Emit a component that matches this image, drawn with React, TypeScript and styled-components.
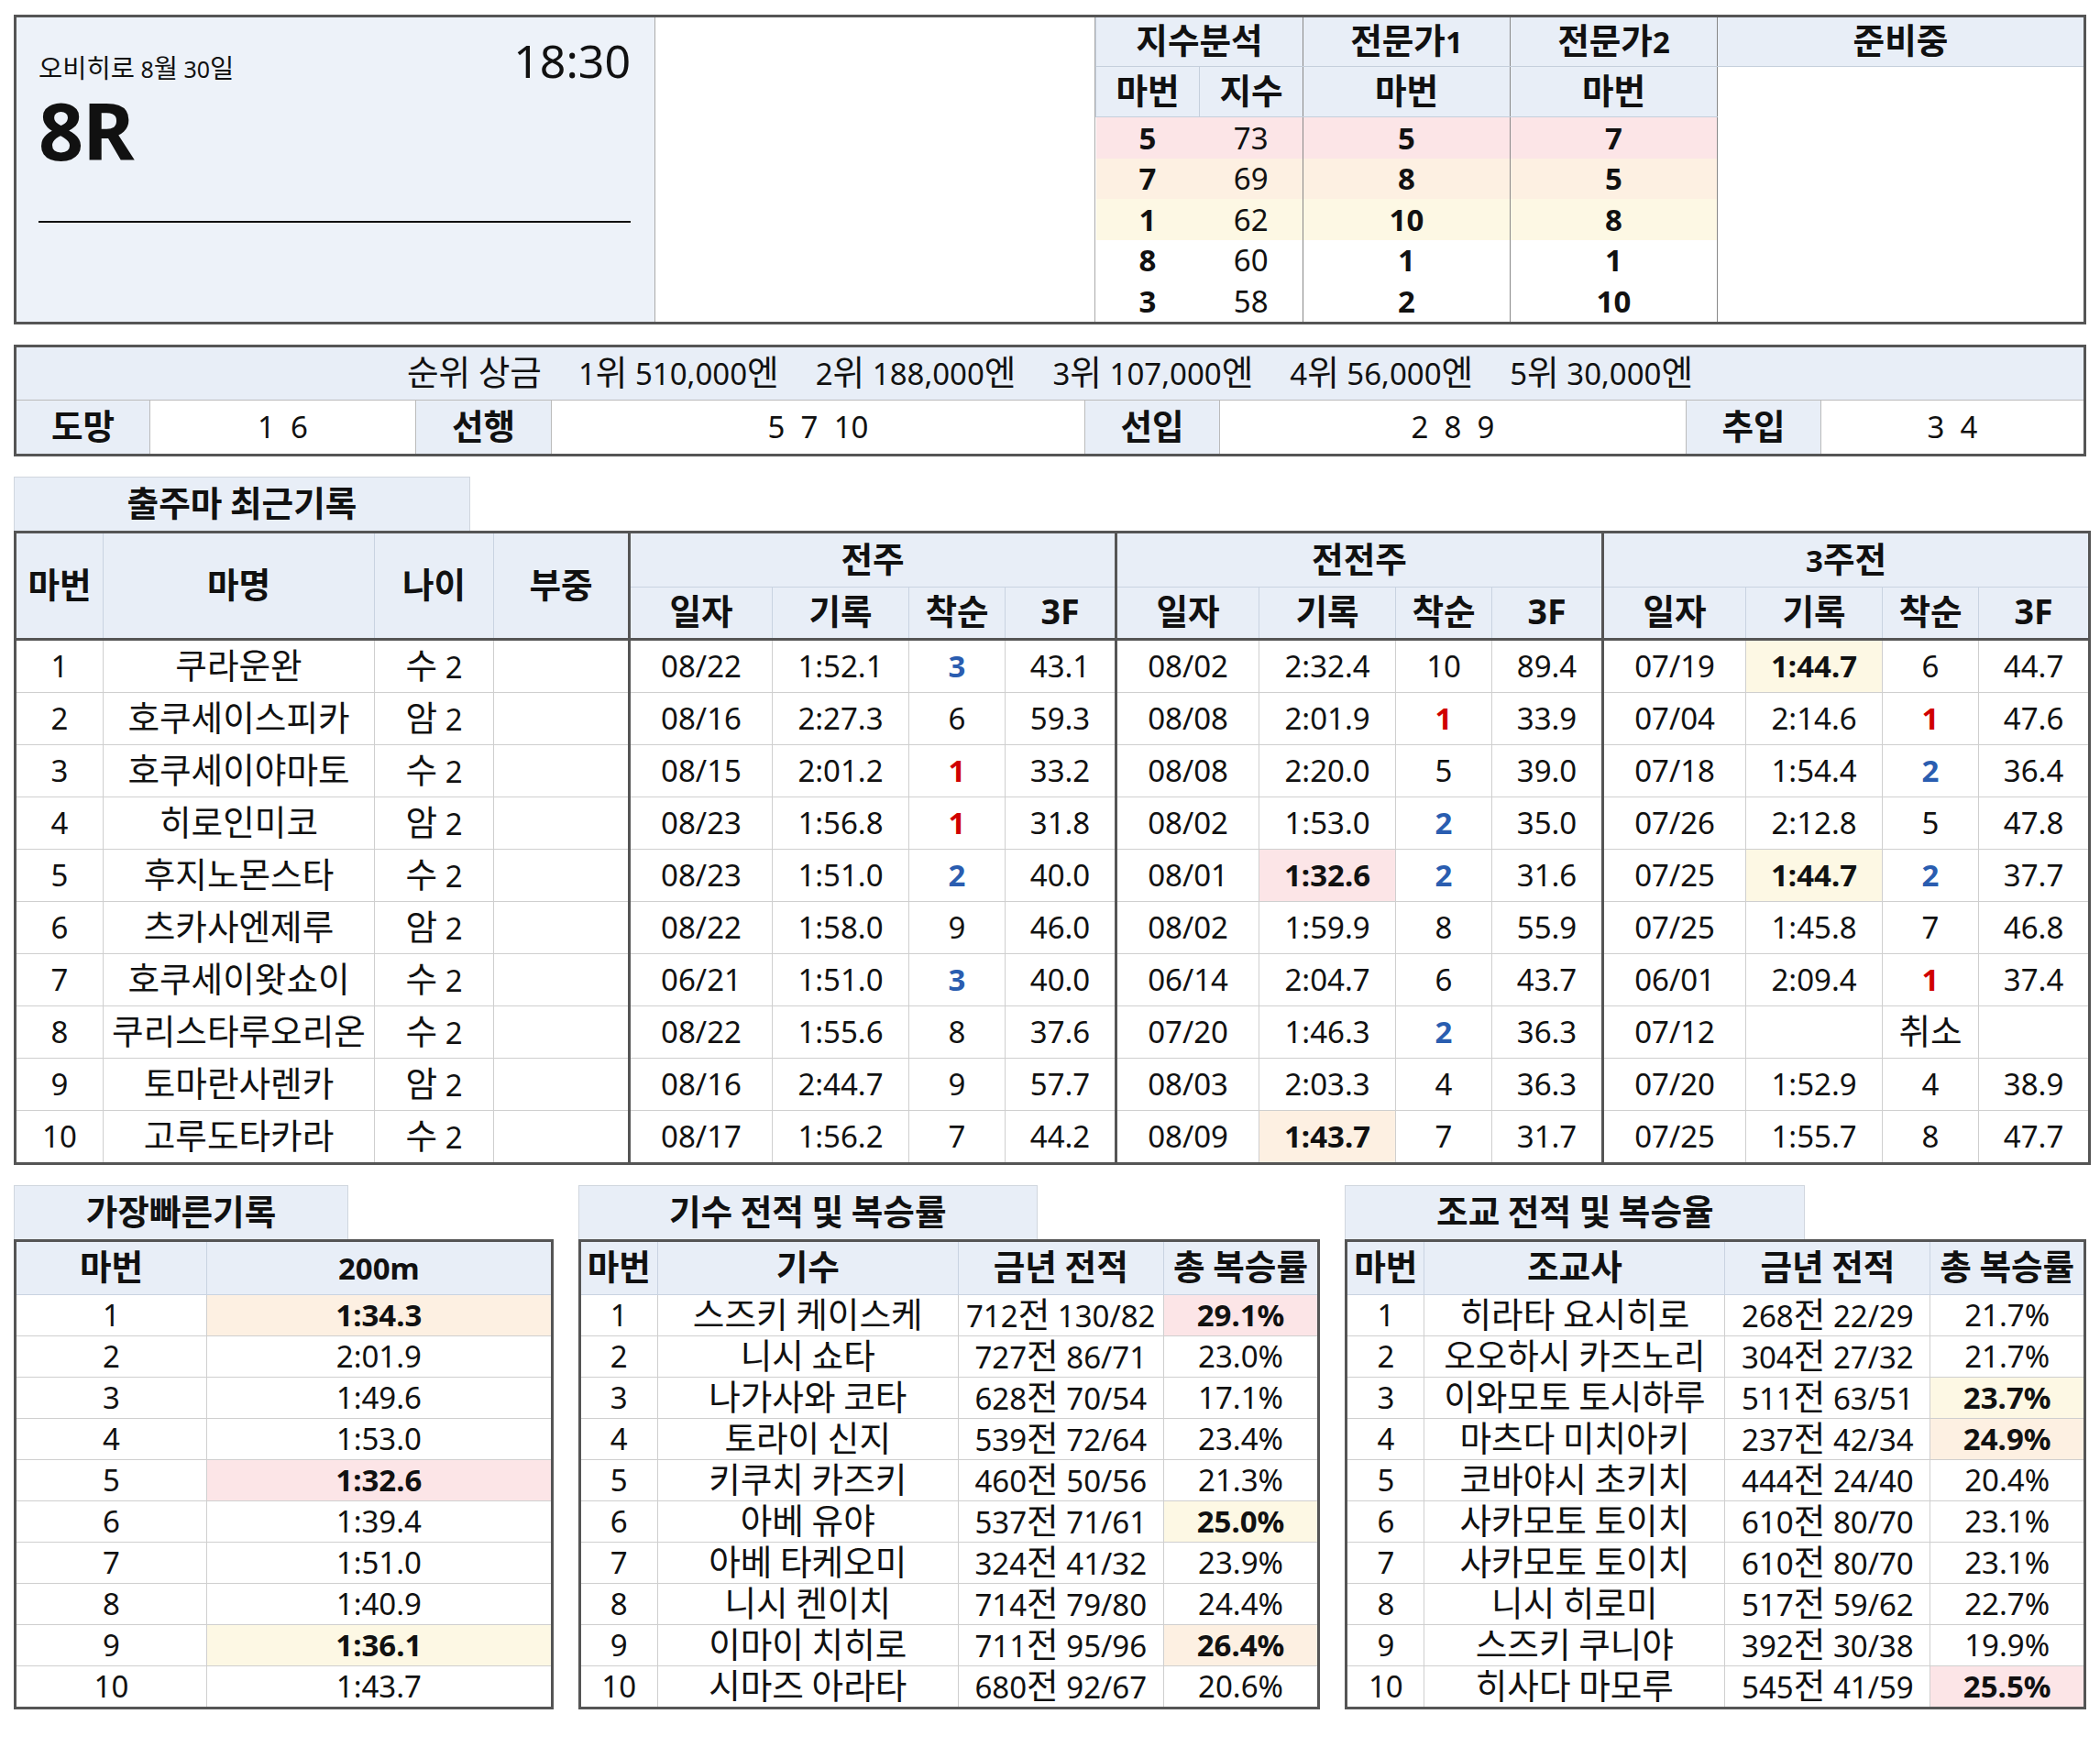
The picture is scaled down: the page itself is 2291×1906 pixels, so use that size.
import type { ReactNode } from "react";
import styled, { createGlobalStyle, css } from "styled-components";

const GlobalStyle = createGlobalStyle`
  html, body {
    margin: 0;
    padding: 0;
    background: #fff;
  }
  body {
    font-family: "Noto Sans", "Noto Sans CJK KR", sans-serif;
    color: #111;
  }
`;

type Hl = "pink" | "peach" | "yellow";

const HL: Record<Hl, string> = {
  pink: "#fce5e7",
  peach: "#fdf0e2",
  yellow: "#fdf8e4",
};

// the sheet's Korean glyphs sit larger than its digits
const Hangul = styled.span`
  display: inline-block;
  font-size: 1.14em;
  line-height: 1;
`;

function ko(s: string): ReactNode {
  const parts = s.split(/([가-힣]+)/);
  return <span>{parts.map((p, i) => (i % 2 === 1 ? <Hangul key={i}>{p}</Hangul> : p))}</span>;
}

const Page = styled.div`
  width: 2261px;
  padding: 16px 0 0 15px;
  display: flex;
  flex-direction: column;
`;

/* ---------- top block ---------- */

const TopBox = styled.section`
  display: flex;
  height: 338px;
  box-sizing: border-box;
  border: 3px solid #555;
`;

const RacePanel = styled.div`
  width: 697px;
  box-sizing: border-box;
  background: #edf2f9;
  border-right: 1px solid #aaa;
  padding: 22px 26px 0 24px;
  display: flex;
  flex-direction: column;
`;

const RaceHead = styled.div`
  display: flex;
  justify-content: space-between;
  align-items: baseline;
  line-height: 1;
`;

const Venue = styled.span`
  font-size: 25px;
`;

const Time = styled.span`
  font-size: 50px;
`;

const RaceNo = styled.div`
  margin-top: 8px;
  font-size: 86px;
  font-weight: 700;
  line-height: 1;
  letter-spacing: -1px;
`;

const RaceRule = styled.div`
  margin-top: 56px;
  border-top: 2px solid #111;
`;

const Blank = styled.div`
  width: 480px;
  border-right: 1px solid #aaa;
  box-sizing: border-box;
`;

const PickWrap = styled.div`
  flex: 1;
  display: flex;
`;

const PickTable = styled.table`
  width: 100%;
  height: 100%;
  border-collapse: collapse;
  table-layout: fixed;
  font-size: 33px;
  line-height: 1.2;
`;

const PickTh = styled.th<{ $group?: boolean; $h: number }>`
  height: ${(p) => p.$h}px;
  padding: 0;
  background: #e8eef7;
  font-weight: 700;
  border-bottom: 1px solid #c5cfdc;
  border-left: 1px solid ${(p) => (p.$group ? "#888" : "#c5cfdc")};
`;

const PickTd = styled.td<{ $group?: boolean; $hl?: Hl; $bold?: boolean }>`
  height: 44px;
  padding: 0;
  text-align: center;
  font-weight: ${(p) => (p.$bold ? 700 : 400)};
  background: ${(p) => (p.$hl ? HL[p.$hl] : "#fff")};
  ${(p) => p.$group && css`border-left: 1px solid #888;`}
`;

/* ---------- prize / style block ---------- */

const PrizeBox = styled.section`
  margin-top: 22px;
  border: 3px solid #555;
  font-size: 33px;
  line-height: 1.2;
`;

const PrizeLine = styled.div`
  height: 57px;
  background: #e8eef7;
  border-bottom: 1px solid #bbb;
  display: flex;
  justify-content: center;
  align-items: center;
  gap: 40px;
`;

const StyleLine = styled.div`
  height: 58px;
  display: grid;
  grid-template-columns: 145px 290px 148px 582px 147px 509px 147px 1fr;
`;

const StyleLabel = styled.div<{ $first?: boolean }>`
  background: #e8eef7;
  font-weight: 700;
  display: flex;
  align-items: center;
  justify-content: center;
  ${(p) => !p.$first && css`border-left: 1px solid #bbb;`}
`;

const StyleValue = styled.div`
  display: flex;
  align-items: center;
  justify-content: center;
  white-space: pre;
  border-left: 1px solid #bbb;
`;

/* ---------- tabs and tables ---------- */

const Tab = styled.div<{ $w: number }>`
  width: ${(p) => p.$w}px;
  height: 59px;
  box-sizing: border-box;
  background: #e8eef7;
  border: 1px solid #d0d6de;
  border-bottom: none;
  display: flex;
  align-items: center;
  justify-content: center;
  font-size: 33px;
  font-weight: 700;
  line-height: 1.2;
`;

const Grid = styled.table`
  width: 100%;
  border-collapse: collapse;
  table-layout: fixed;
  border: 3px solid #555;
  font-size: 33px;
  line-height: 1.2;
`;

const Th = styled.th<{ $thick?: boolean; $under?: boolean; $h?: number }>`
  height: ${(p) => p.$h ?? 58}px;
  padding: 0;
  background: #e8eef7;
  font-weight: 700;
  white-space: nowrap;
  border: 1px solid #c9d3e1;
  ${(p) => p.$thick && css`border-left: 3px solid #555;`}
  ${(p) => p.$under && css`border-bottom: 3px solid #555;`}
`;

const Td = styled.td<{ $thick?: boolean; $hl?: Hl; $mark?: "red" | "blue"; $h: number }>`
  height: ${(p) => p.$h}px;
  padding: 0;
  text-align: center;
  white-space: nowrap;
  border: 1px solid #cfcfcf;
  background: ${(p) => (p.$hl ? HL[p.$hl] : "#fff")};
  font-weight: ${(p) => (p.$hl || p.$mark ? 700 : 400)};
  color: ${(p) => (p.$mark === "red" ? "#d00000" : p.$mark === "blue" ? "#2a5db0" : "#111")};
  ${(p) => p.$thick && css`border-left: 3px solid #555;`}
`;

const Section = styled.section`
  margin-top: 22px;
  display: flex;
  flex-direction: column;
`;

const Bottom = styled.div`
  margin-top: 22px;
  display: flex;
  gap: 27px;
`;

const Block = styled.div<{ $w: number }>`
  width: ${(p) => p.$w}px;
  display: flex;
  flex-direction: column;
`;

/* ---------- data ---------- */

const picks: [string, string, string, string, Hl | undefined][] = [
  ["5", "73", "5", "7", "pink"],
  ["7", "69", "8", "5", "peach"],
  ["1", "62", "10", "8", "yellow"],
  ["8", "60", "1", "1", undefined],
  ["3", "58", "2", "10", undefined],
];

type Run = [string, string, string, string];
const horses: [string, string, string, Run, Run, Run][] = [
  ["1", "쿠라운완", "수 2", ["08/22", "1:52.1", "3", "43.1"], ["08/02", "2:32.4", "10", "89.4"], ["07/19", "Y1:44.7", "6", "44.7"]],
  ["2", "호쿠세이스피카", "암 2", ["08/16", "2:27.3", "6", "59.3"], ["08/08", "2:01.9", "1", "33.9"], ["07/04", "2:14.6", "1", "47.6"]],
  ["3", "호쿠세이야마토", "수 2", ["08/15", "2:01.2", "1", "33.2"], ["08/08", "2:20.0", "5", "39.0"], ["07/18", "1:54.4", "2", "36.4"]],
  ["4", "히로인미코", "암 2", ["08/23", "1:56.8", "1", "31.8"], ["08/02", "1:53.0", "2", "35.0"], ["07/26", "2:12.8", "5", "47.8"]],
  ["5", "후지노몬스타", "수 2", ["08/23", "1:51.0", "2", "40.0"], ["08/01", "P1:32.6", "2", "31.6"], ["07/25", "Y1:44.7", "2", "37.7"]],
  ["6", "츠카사엔제루", "암 2", ["08/22", "1:58.0", "9", "46.0"], ["08/02", "1:59.9", "8", "55.9"], ["07/25", "1:45.8", "7", "46.8"]],
  ["7", "호쿠세이왓쇼이", "수 2", ["06/21", "1:51.0", "3", "40.0"], ["06/14", "2:04.7", "6", "43.7"], ["06/01", "2:09.4", "1", "37.4"]],
  ["8", "쿠리스타루오리온", "수 2", ["08/22", "1:55.6", "8", "37.6"], ["07/20", "1:46.3", "2", "36.3"], ["07/12", "", "취소", ""]],
  ["9", "토마란사렌카", "암 2", ["08/16", "2:44.7", "9", "57.7"], ["08/03", "2:03.3", "4", "36.3"], ["07/20", "1:52.9", "4", "38.9"]],
  ["10", "고루도타카라", "수 2", ["08/17", "1:56.2", "7", "44.2"], ["08/09", "O1:43.7", "7", "31.7"], ["07/25", "1:55.7", "8", "47.7"]],
];

const fastest = ["O1:34.3", "2:01.9", "1:49.6", "1:53.0", "P1:32.6", "1:39.4", "1:51.0", "1:40.9", "Y1:36.1", "1:43.7"];

const jockeys: [string, string, string][] = [
  ["스즈키 케이스케", "712전 130/82", "P29.1%"],
  ["니시 쇼타", "727전 86/71", "23.0%"],
  ["나가사와 코타", "628전 70/54", "17.1%"],
  ["토라이 신지", "539전 72/64", "23.4%"],
  ["키쿠치 카즈키", "460전 50/56", "21.3%"],
  ["아베 유야", "537전 71/61", "Y25.0%"],
  ["아베 타케오미", "324전 41/32", "23.9%"],
  ["니시 켄이치", "714전 79/80", "24.4%"],
  ["이마이 치히로", "711전 95/96", "O26.4%"],
  ["시마즈 아라타", "680전 92/67", "20.6%"],
];

const trainers: [string, string, string][] = [
  ["히라타 요시히로", "268전 22/29", "21.7%"],
  ["오오하시 카즈노리", "304전 27/32", "21.7%"],
  ["이와모토 토시하루", "511전 63/51", "Y23.7%"],
  ["마츠다 미치아키", "237전 42/34", "O24.9%"],
  ["코바야시 초키치", "444전 24/40", "20.4%"],
  ["사카모토 토이치", "610전 80/70", "23.1%"],
  ["사카모토 토이치", "610전 80/70", "23.1%"],
  ["니시 히로미", "517전 59/62", "22.7%"],
  ["스즈키 쿠니야", "392전 30/38", "19.9%"],
  ["히사다 마모루", "545전 41/59", "P25.5%"],
];

// "P1:32.6" -> pink highlight, "O" peach, "Y" yellow
function parse(v: string): { text: string; hl?: Hl } {
  const k = v.charAt(0);
  if (k === "P") return { text: v.slice(1), hl: "pink" };
  if (k === "O") return { text: v.slice(1), hl: "peach" };
  if (k === "Y") return { text: v.slice(1), hl: "yellow" };
  return { text: v };
}

function placeMark(v: string): "red" | "blue" | undefined {
  if (v === "1") return "red";
  if (v === "2" || v === "3") return "blue";
  return undefined;
}

function RunCells({ run }: { run: Run }) {
  const rec = parse(run[1]);
  return (
    <>
      <Td $h={56} $thick>{run[0]}</Td>
      <Td $h={56} $hl={rec.hl}>{rec.text}</Td>
      <Td $h={56} $mark={placeMark(run[2])}>{ko(run[2])}</Td>
      <Td $h={56}>{run[3]}</Td>
    </>
  );
}

function StatTable({ title, rows }: { title: string; rows: [string, string, string][] }) {
  return (
    <Grid>
      <colgroup>
        <col style={{ width: 85 }} />
        <col style={{ width: 328 }} />
        <col style={{ width: 224 }} />
        <col />
      </colgroup>
      <thead>
        <tr>
          <Th $h={57}>{ko("마번")}</Th>
          <Th $h={57}>{ko(title)}</Th>
          <Th $h={57}>{ko("금년 전적")}</Th>
          <Th $h={57}>{ko("총 복승률")}</Th>
        </tr>
      </thead>
      <tbody>
        {rows.map((r, i) => {
          const rate = parse(r[2]);
          return (
            <tr key={i}>
              <Td $h={44}>{i + 1}</Td>
              <Td $h={44}>{ko(r[0])}</Td>
              <Td $h={44}>{ko(r[1])}</Td>
              <Td $h={44} $hl={rate.hl}>{rate.text}</Td>
            </tr>
          );
        })}
      </tbody>
    </Grid>
  );
}

export default function App() {
  return (
    <>
      <GlobalStyle />
      <Page>
        <TopBox>
          <RacePanel>
            <RaceHead>
              <Venue>{ko("오비히로 8월 30일")}</Venue>
              <Time>18:30</Time>
            </RaceHead>
            <RaceNo>8R</RaceNo>
            <RaceRule />
          </RacePanel>
          <Blank />
          <PickWrap>
            <PickTable>
              <colgroup>
                <col style={{ width: 113 }} />
                <col style={{ width: 113 }} />
                <col style={{ width: 226 }} />
                <col style={{ width: 226 }} />
                <col />
              </colgroup>
              <tbody>
                <tr>
                  <PickTh $h={52} colSpan={2}>{ko("지수분석")}</PickTh>
                  <PickTh $h={52} $group>{ko("전문가1")}</PickTh>
                  <PickTh $h={52} $group>{ko("전문가2")}</PickTh>
                  <PickTh $h={52} $group>{ko("준비중")}</PickTh>
                </tr>
                <tr>
                  <PickTh $h={54}>{ko("마번")}</PickTh>
                  <PickTh $h={54}>{ko("지수")}</PickTh>
                  <PickTh $h={54} $group>{ko("마번")}</PickTh>
                  <PickTh $h={54} $group>{ko("마번")}</PickTh>
                  <PickTd $group rowSpan={6} />
                </tr>
                {picks.map((p, i) => (
                  <tr key={i}>
                    <PickTd $hl={p[4]} $bold>{p[0]}</PickTd>
                    <PickTd $hl={p[4]}>{p[1]}</PickTd>
                    <PickTd $hl={p[4]} $bold $group>{p[2]}</PickTd>
                    <PickTd $hl={p[4]} $bold $group>{p[3]}</PickTd>
                  </tr>
                ))}
              </tbody>
            </PickTable>
          </PickWrap>
        </TopBox>

        <PrizeBox>
          <PrizeLine>
            {["순위 상금", "1위 510,000엔", "2위 188,000엔", "3위 107,000엔", "4위 56,000엔", "5위 30,000엔"].map((t) => (
              <span key={t}>{ko(t)}</span>
            ))}
          </PrizeLine>
          <StyleLine>
            <StyleLabel $first>{ko("도망")}</StyleLabel>
            <StyleValue>{"1  6"}</StyleValue>
            <StyleLabel>{ko("선행")}</StyleLabel>
            <StyleValue>{"5  7  10"}</StyleValue>
            <StyleLabel>{ko("선입")}</StyleLabel>
            <StyleValue>{"2  8  9"}</StyleValue>
            <StyleLabel>{ko("추입")}</StyleLabel>
            <StyleValue>{"3  4"}</StyleValue>
          </StyleLine>
        </PrizeBox>

        <Section>
          <Tab $w={498}>{ko("출주마 최근기록")}</Tab>
          <Grid>
            <colgroup>
              <col style={{ width: 96 }} />
              <col style={{ width: 296 }} />
              <col style={{ width: 130 }} />
              <col style={{ width: 148 }} />
              {[0, 1, 2].map((g) => (
                <>
                  <col key={`a${g}`} style={{ width: 156 }} />
                  <col key={`b${g}`} style={{ width: 149 }} />
                  <col key={`c${g}`} style={{ width: 105 }} />
                  <col key={`d${g}`} style={{ width: 121 }} />
                </>
              ))}
            </colgroup>
            <thead>
              <tr>
                <Th rowSpan={2} $under>{ko("마번")}</Th>
                <Th rowSpan={2} $under>{ko("마명")}</Th>
                <Th rowSpan={2} $under>{ko("나이")}</Th>
                <Th rowSpan={2} $under>{ko("부중")}</Th>
                <Th colSpan={4} $thick>{ko("전주")}</Th>
                <Th colSpan={4} $thick>{ko("전전주")}</Th>
                <Th colSpan={4} $thick>{ko("3주전")}</Th>
              </tr>
              <tr>
                {["전주", "전전주", "3주전"].map((g) =>
                  ["일자", "기록", "착순", "3F"].map((h, j) => (
                    <Th key={g + h} $h={55} $under $thick={j === 0}>
                      {h === "3F" ? <Hangul>3F</Hangul> : ko(h)}
                    </Th>
                  ))
                )}
              </tr>
            </thead>
            <tbody>
              {horses.map((h) => (
                <tr key={h[0]}>
                  <Td $h={56}>{h[0]}</Td>
                  <Td $h={56}>{ko(h[1])}</Td>
                  <Td $h={56}>{ko(h[2])}</Td>
                  <Td $h={56}></Td>
                  <RunCells run={h[3]} />
                  <RunCells run={h[4]} />
                  <RunCells run={h[5]} />
                </tr>
              ))}
            </tbody>
          </Grid>
        </Section>

        <Bottom>
          <Block $w={589}>
            <Tab $w={365}>{ko("가장빠른기록")}</Tab>
            <Grid>
              <colgroup>
                <col style={{ width: 209 }} />
                <col />
              </colgroup>
              <thead>
                <tr>
                  <Th $h={57}>{ko("마번")}</Th>
                  <Th $h={57}>200m</Th>
                </tr>
              </thead>
              <tbody>
                {fastest.map((f, i) => {
                  const t = parse(f);
                  return (
                    <tr key={i}>
                      <Td $h={44}>{i + 1}</Td>
                      <Td $h={44} $hl={t.hl}>{t.text}</Td>
                    </tr>
                  );
                })}
              </tbody>
            </Grid>
          </Block>
          <Block $w={810}>
            <Tab $w={501}>{ko("기수 전적 및 복승률")}</Tab>
            <StatTable title="기수" rows={jockeys} />
          </Block>
          <Block $w={809}>
            <Tab $w={502}>{ko("조교 전적 및 복승율")}</Tab>
            <StatTable title="조교사" rows={trainers} />
          </Block>
        </Bottom>
      </Page>
    </>
  );
}
